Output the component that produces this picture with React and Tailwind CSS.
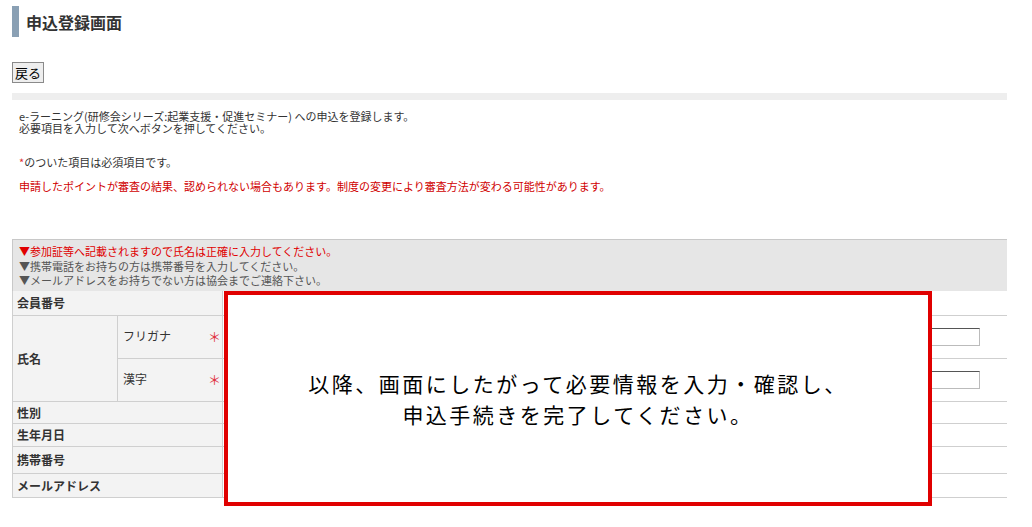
import React from 'react';

const jp = { fontFamily: '"Noto Sans CJK JP", "Noto Sans", sans-serif' };

const Label = ({ children, className = '', ...rest }) => (
  <td
    className={`border-b border-r border-[#cfcfcf] bg-[#f3f3f3] pl-[4px] text-[12px] font-bold text-[#333] align-middle ${className}`}
    {...rest}
  >
    {children}
  </td>
);

const Value = ({ children, className = '' }) => (
  <td className={`border-b border-[#cfcfcf] bg-white align-middle ${className}`}>{children}</td>
);

const Req = () => <span className="float-right pr-[1px] text-[13px] font-normal text-[#e03040]">＊</span>;

export default function App() {
  return (
    <div className="relative h-[527px] w-[1032px] overflow-hidden bg-white text-[#333]" style={jp}>
      <div className="w-[1019px] px-[12px] pt-[6px]">
        {/* Title */}
        <div className="flex h-[31px] items-center">
          <div className="h-full w-[7px] bg-[#8aa0b4]" />
          <h1 className="ml-[7px] text-[16px] font-bold leading-none text-[#333]">申込登録画面</h1>
        </div>

        <div className="mt-[25px] flex">
          <button className="h-[21px] border border-[#8a8a8a] bg-[#eeeeee] px-[2px] text-[13px] leading-none text-black">
            戻る
          </button>
        </div>

        <div className="mt-[10px] h-[7px] bg-[#eeeeee]" />

        {/* Intro text */}
        <div className="mt-[10px] pl-[7px] text-[11px] leading-[12px] text-[#333]">
          <p>e-ラーニング(研修会シリーズ:起業支援・促進セミナー) への申込を登録します。</p>
          <p>必要項目を入力して次へボタンを押してください。</p>
        </div>

        <p className="mt-[21px] pl-[7px] text-[11px] leading-[14px]">
          <span className="text-[#e03030]">*</span>のついた項目は必須項目です。
        </p>
        <p className="mt-[10px] pl-[7px] text-[11px] leading-[14px] text-[#d00000]">
          申請したポイントが審査の結果、認められない場合もあります。制度の変更により審査方法が変わる可能性があります。
        </p>

        {/* Form table */}
        <div className="mt-[46px]">
          <div className="border-t border-l border-[#c8c8c8] bg-[#e6e6e6] pl-[6px] pt-[4px] pb-[3px] text-[11px] leading-[14.5px]">
            <p className="text-[#e00000]">▼参加証等へ記載されますので氏名は正確に入力してください。</p>
            <p className="text-[#555]">▼携帯電話をお持ちの方は携帯番号を入力してください。</p>
            <p className="text-[#555]">▼メールアドレスをお持ちでない方は協会までご連絡下さい。</p>
          </div>
          <table className="w-full border-collapse border-l border-[#cfcfcf]">
            <colgroup>
              <col className="w-[105px]" />
              <col className="w-[105px]" />
              <col />
            </colgroup>
            <tbody>
              <tr className="h-[25px]">
                <Label colSpan={2}>会員番号</Label>
                <Value />
              </tr>
              <tr className="h-[43px]">
                <Label rowSpan={2}>氏名</Label>
                <Label className="pl-[5px] font-normal">
                  フリガナ
                  <Req />
                </Label>
                <Value>
                  <div className="flex justify-end pr-[27px]">
                    <input className="h-[18px] w-[300px] border border-[#bbb] border-t-[#555]" />
                  </div>
                </Value>
              </tr>
              <tr className="h-[43px]">
                <Label className="pl-[5px] font-normal">
                  漢字
                  <Req />
                </Label>
                <Value>
                  <div className="flex justify-end pr-[27px]">
                    <input className="h-[18px] w-[300px] border border-[#bbb] border-t-[#555]" />
                  </div>
                </Value>
              </tr>
              <tr className="h-[22px]">
                <Label colSpan={2}>性別</Label>
                <Value />
              </tr>
              <tr className="h-[23px]">
                <Label colSpan={2}>生年月日</Label>
                <Value />
              </tr>
              <tr className="h-[27px]">
                <Label colSpan={2}>携帯番号</Label>
                <Value />
              </tr>
              <tr className="h-[24px]">
                <Label colSpan={2}>メールアドレス</Label>
                <Value />
              </tr>
            </tbody>
          </table>
        </div>
      </div>

      {/* Callout overlay */}
      <div className="absolute left-[224px] top-[291px] flex h-[215px] w-[708px] flex-col items-center justify-center border-[4px] border-[#e00000] bg-white text-[21px] leading-[31px] tracking-[2.5px] text-black">
        <p>以降、画面にしたがって必要情報を入力・確認し、</p>
        <p>申込手続きを完了してください。</p>
      </div>
    </div>
  );
}
